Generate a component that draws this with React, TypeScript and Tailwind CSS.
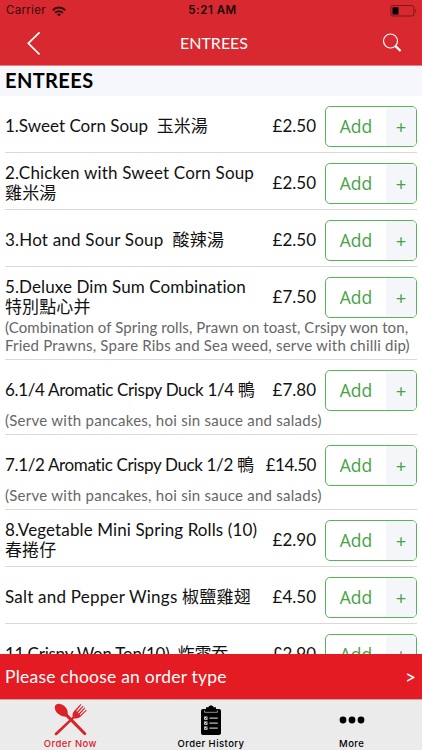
import { Fragment } from 'react';

type MenuItem = {
  lines: string[];
  price: string;
  tracking?: string;
  note?: { text: string; tracking: string }[];
};

const serveNote = { text: '(Serve with pancakes, hoi sin sauce and salads)', tracking: 'tracking-[0.26px]' };

const items: MenuItem[] = [
  { lines: ['1.Sweet Corn Soup  玉米湯'], price: '£2.50' },
  { lines: ['2.Chicken with Sweet Corn Soup', '雞米湯'], price: '£2.50', tracking: 'tracking-[0.18px]' },
  { lines: ['3.Hot and Sour Soup  酸辣湯'], price: '£2.50', tracking: 'tracking-[0.2px]' },
  {
    lines: ['5.Deluxe Dim Sum Combination', '特別點心并'],
    price: '£7.50',
    tracking: 'tracking-[0.1px]',
    note: [
      { text: '(Combination of Spring rolls, Prawn on toast, Crsipy won ton,', tracking: 'tracking-[0.08px]' },
      { text: 'Fried Prawns, Spare Ribs and Sea weed, serve with chilli dip)', tracking: 'tracking-[0.2px]' },
    ],
  },
  { lines: ['6.1/4 Aromatic Crispy Duck 1/4 鴨'], price: '£7.80', tracking: 'tracking-[-0.33px]', note: [serveNote] },
  { lines: ['7.1/2 Aromatic Crispy Duck 1/2 鴨'], price: '£14.50', tracking: 'tracking-[-0.36px]', note: [serveNote] },
  { lines: ['8.Vegetable Mini Spring Rolls (10)', '春捲仔'], price: '£2.90', tracking: 'tracking-[0.11px]' },
  { lines: ['Salt and Pepper Wings 椒鹽雞翅'], price: '£4.50', tracking: 'tracking-[0.22px]' },
  { lines: ['11.Crispy Won Ton(10)  炸雲吞'], price: '£2.90', tracking: 'tracking-[-0.24px]' },
];

function StatusBar() {
  return (
    <div className="flex h-[22px] items-center justify-between pl-[6px] pr-[5px] font-['Inter','Liberation_Sans',sans-serif] text-black/80">
      <div className="flex w-32 items-center gap-[6px]">
        <span className="text-[11.5px] leading-none tracking-[0.3px]">Carrier</span>
        <svg width="14" height="11" viewBox="0 0 14 11" fill="none" stroke="currentColor" strokeWidth="2">
          <path d="M0.8 4.2C4.2 0.6 9.8 0.6 13.2 4.2" />
          <path d="M3.2 6.8C5.3 4.7 8.7 4.7 10.8 6.8" />
          <path d="M4.9 8.3C6.1 7.2 7.9 7.2 9.1 8.3L7 10.5Z" fill="currentColor" stroke="none" />
        </svg>
      </div>
      <span className="pl-[2px] text-[11.5px] font-semibold leading-none tracking-[0.5px] text-black/90">5:21 AM</span>
      <div className="flex w-32 justify-end">
        <svg width="27" height="12" viewBox="0 0 27 12">
          <rect x="0.9" y="0.6" width="23" height="10.4" rx="2" fill="none" stroke="#7d161b" />
          <rect x="2.5" y="2.2" width="6" height="7.2" rx="0.5" fill="#000" />
          <path d="M25.3 4v3.6c1.3-.4 1.3-3.2 0-3.6z" fill="#7d161b" />
        </svg>
      </div>
    </div>
  );
}

function NavBar() {
  return (
    <div className="flex h-[42px] items-center justify-between pl-[26px] pr-[20px] text-white">
      <svg width="16" height="24" viewBox="0 0 16 24" fill="none" stroke="currentColor" strokeWidth="1.7">
        <path d="M13.5 1.3L2.3 12.3L13.5 23.3" />
      </svg>
      <h1 className="pb-px pl-[4px] text-[16px] leading-none">ENTREES</h1>
      <svg width="20" height="20" viewBox="0 0 20 20" fill="none" stroke="currentColor">
        <circle cx="8.5" cy="8" r="7" strokeWidth="1.2" />
        <path d="M13 12.6L18.6 18" strokeWidth="2.2" />
      </svg>
    </div>
  );
}

function AddButton() {
  return (
    <button className="flex h-[41px] w-[92px] shrink-0 overflow-hidden rounded-[5px] border border-[#58b457] text-[#46a346]">
      <span className="flex flex-1 items-center justify-center font-['Open_Sans',sans-serif] text-[17.5px] leading-none">Add</span>
      <span className="flex w-[30px] items-center justify-center bg-[#f4f6f9] text-[18px] leading-none">+</span>
    </button>
  );
}

function MenuRow({ item }: { item: MenuItem }) {
  return (
    <li className="mx-[5px] border-b border-[#d9d9d9] pb-[5px] pt-[10px]">
      <div className="flex h-[41px] items-center">
        <p className={`min-w-0 flex-1 whitespace-pre pb-[2px] text-[17px] leading-[20px] text-[#111] ${item.tracking ?? ''}`}>
          {item.lines.map((line, i) => (
            <Fragment key={line}>
              {i > 0 && <br />}
              {line}
            </Fragment>
          ))}
        </p>
        <span className={`mr-[9px] pb-[2px] text-[17px] leading-[20px] text-[#111] ${item.price.length > 5 ? 'tracking-[-0.5px]' : ''}`}>
          {item.price}
        </span>
        <AddButton />
      </div>
      {item.note?.map((line) => (
        <p key={line.text} className={`whitespace-pre text-[15px] leading-[18px] text-[#666] ${line.tracking}`}>
          {line.text}
        </p>
      ))}
    </li>
  );
}

function CutleryIcon() {
  return (
    <svg width="33" height="33" viewBox="0 0 33 33" fill="currentColor">
      <path d="M.8 4.4C.8 2 3 .6 5.6 .9C10 1.4 13.7 5.4 13.7 9.4C13.7 10.6 13.8 11.3 14.6 12.1L31.9 29.7C33.1 31.2 31.3 33 29.8 31.8L12.4 14.2C11.7 13.5 11 13.6 9.8 13.4C5 12.6 .8 8.4 .8 4.4Z" />
      <path d="M1 29.9L18.6 13.7C18.3 11.2 18.9 9.4 20.4 7.8L26.6 1.1L27.3 1.8L22.3 8.1L23 8.8L28.8 2.7L29.5 3.4L24 9.8L24.7 10.5L30.6 4.5L31.3 5.2L25.7 11.5L26.4 12.2L32.1 6.7L32.8 7.4L26.4 13.7C24.6 15.2 22.6 15.7 20.3 15.2L3 32C1.5 33 0 31.3 1 29.9Z" />
    </svg>
  );
}

function ClipboardIcon() {
  return (
    <svg width="20" height="30" viewBox="0 0 20 30">
      <path d="M2 4H5V2.3H7.4C8 -.2 12 -.2 12.6 2.3H15V4H18C19.2 4 20 4.8 20 6V28C20 29.2 19.2 30 18 30H2C.8 30 0 29.2 0 28V6C0 4.8.8 4 2 4Z" fill="#000" />
      <path d="M3.6 5.3V7.3H16.4V5.3" stroke="#ebebeb" strokeWidth="0.6" fill="none" />
      <path d="M3.2 11.4h3.3v3.3H3.2zM3.2 16.4h3.3v3.3H3.2zM3.2 21.4h3.3v3.3H3.2z" fill="#ebebeb" />
      <path d="M4 13l.8.8L6.2 12M4 18l.8.8L6.2 17M4 23l.8.8L6.2 22" stroke="#000" strokeWidth="0.7" fill="none" />
      <path d="M8.4 13.1H16.8M8.4 18.1H16.8M8.4 23.1H16.8" stroke="#ebebeb" strokeWidth="1" />
    </svg>
  );
}

function MoreIcon() {
  return (
    <svg width="26" height="8" viewBox="0 0 26 8" fill="#000">
      <circle cx="4" cy="4" r="3.4" />
      <circle cx="13" cy="4" r="3.4" />
      <circle cx="22" cy="4" r="3.4" />
    </svg>
  );
}

const tabs = [
  { label: 'Order Now', icon: <CutleryIcon />, color: 'text-[#dc2229]' },
  { label: 'Order History', icon: <ClipboardIcon />, color: 'text-black' },
  { label: 'More', icon: <MoreIcon />, color: 'text-black' },
];

export default function App() {
  return (
    <div className="flex h-[750px] w-[422px] flex-col overflow-hidden bg-white font-['Lato','Noto_Sans_CJK_TC',sans-serif] [font-variant-ligatures:none]">
      <header className="h-[66px] shrink-0 border-b border-[#e98085] bg-[#d7292f]">
        <StatusBar />
        <NavBar />
      </header>
      <h2 className="flex h-[30px] shrink-0 items-center bg-[#f6f7fa] pb-[3px] pl-[5px] text-[20px] font-bold leading-none tracking-[0.4px] text-black">
        ENTREES
      </h2>
      <ul className="min-h-0 flex-1 overflow-hidden">
        {items.map((item) => (
          <MenuRow key={item.lines[0]} item={item} />
        ))}
      </ul>
      <button className="flex h-[45px] shrink-0 items-center justify-between bg-[#e51b23] pl-[5px] pr-[6px] text-[17.5px] leading-none text-white">
        <span className="tracking-[0.22px]">Please choose an order type</span>
        <span className="text-[19px]">&gt;</span>
      </button>
      <nav className="flex h-[51px] shrink-0 border-t border-[#c9a5a7] bg-[#ebebeb] font-['Inter','Liberation_Sans',sans-serif]">
        {tabs.map((tab) => (
          <div key={tab.label} className={`flex flex-1 flex-col items-center ${tab.color}`}>
            <div className="flex h-[38px] items-center pt-px">{tab.icon}</div>
            <span className="text-[9.5px] font-medium leading-[11px] tracking-[0.45px]">{tab.label}</span>
          </div>
        ))}
      </nav>
    </div>
  );
}
